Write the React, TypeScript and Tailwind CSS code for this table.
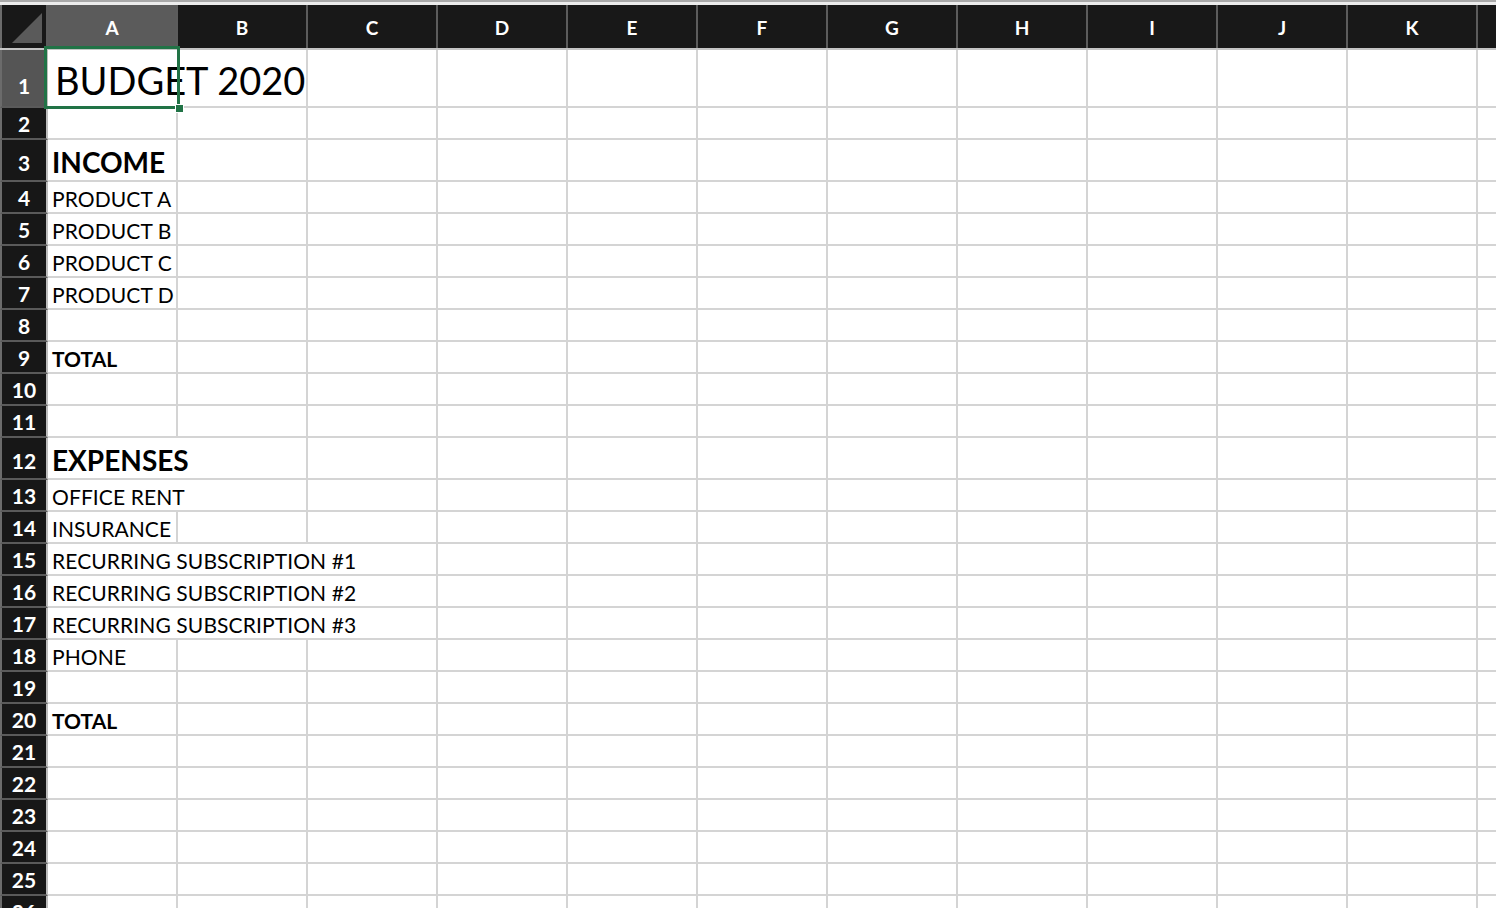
const COLUMNS = ["A", "B", "C", "D", "E", "F", "G", "H", "I", "J", "K", "L"];

type Kind = "title" | "section" | "bold" | "plain";

type SheetRow = {
  n: number;
  height: "h-[58px]" | "h-[32px]" | "h-[42px]";
  text?: string;
  kind?: Kind;
  span?: 1 | 2 | 3;
};

const ROWS: SheetRow[] = [
  { n: 1, height: "h-[58px]", text: "BUDGET 2020", kind: "title", span: 2 },
  { n: 2, height: "h-[32px]" },
  { n: 3, height: "h-[42px]", text: "INCOME", kind: "section" },
  { n: 4, height: "h-[32px]", text: "PRODUCT A", kind: "plain" },
  { n: 5, height: "h-[32px]", text: "PRODUCT B", kind: "plain" },
  { n: 6, height: "h-[32px]", text: "PRODUCT C", kind: "plain" },
  { n: 7, height: "h-[32px]", text: "PRODUCT D", kind: "plain" },
  { n: 8, height: "h-[32px]" },
  { n: 9, height: "h-[32px]", text: "TOTAL", kind: "bold" },
  { n: 10, height: "h-[32px]" },
  { n: 11, height: "h-[32px]" },
  { n: 12, height: "h-[42px]", text: "EXPENSES", kind: "section", span: 2 },
  { n: 13, height: "h-[32px]", text: "OFFICE RENT", kind: "plain", span: 2 },
  { n: 14, height: "h-[32px]", text: "INSURANCE", kind: "plain" },
  { n: 15, height: "h-[32px]", text: "RECURRING SUBSCRIPTION #1", kind: "plain", span: 3 },
  { n: 16, height: "h-[32px]", text: "RECURRING SUBSCRIPTION #2", kind: "plain", span: 3 },
  { n: 17, height: "h-[32px]", text: "RECURRING SUBSCRIPTION #3", kind: "plain", span: 3 },
  { n: 18, height: "h-[32px]", text: "PHONE", kind: "plain" },
  { n: 19, height: "h-[32px]" },
  { n: 20, height: "h-[32px]", text: "TOTAL", kind: "bold" },
  { n: 21, height: "h-[32px]" },
  { n: 22, height: "h-[32px]" },
  { n: 23, height: "h-[32px]" },
  { n: 24, height: "h-[32px]" },
  { n: 25, height: "h-[32px]" },
  { n: 26, height: "h-[32px]" },
];

const SPAN_WIDTH = {
  1: "w-[130px]",
  2: "w-[260px]",
  3: "w-[390px]",
};

const TEXT_STYLE: Record<Kind, string> = {
  title: "text-[38px] pl-[7px] pb-[7px]",
  section: "text-[28px] font-bold pl-1 pb-[4px]",
  bold: "text-[21px] font-bold pl-1 pb-[3px]",
  plain: "text-[21px] tracking-[0.1px] pl-1 pb-[3px]",
};

// row headers sit a bit higher in the taller rows
const NUMBER_PAD: Record<SheetRow["height"], string> = {
  "h-[58px]": "pb-[8px]",
  "h-[42px]": "pb-[5px]",
  "h-[32px]": "pb-[2px]",
};

function ColumnHeader({ letter }: { letter: string }) {
  const selected = letter === "A";
  return (
    <div
      className={`w-[130px] shrink-0 h-full flex items-center justify-center pt-1 border-r-2 border-[#5c5c5c] text-[19px] font-bold text-white ${
        selected ? "bg-[#5b5b5b]" : "bg-[#181818]"
      }`}
    >
      {letter}
    </div>
  );
}

function Row({ row }: { row: SheetRow }) {
  const span = row.span ?? 1;
  const rest = COLUMNS.length - span;
  const selected = row.n === 1;

  return (
    <div className={`flex shrink-0 ${row.height}`}>
      <div
        className={`w-[48px] shrink-0 h-full flex items-end justify-center border-l-2 border-l-[#6b6b6b] border-r-2 border-r-[#bdbdbd] border-b-2 border-b-[#5a5a5a] text-[21px] font-bold text-white leading-none ${
          NUMBER_PAD[row.height]
        } ${selected ? "bg-[#555555]" : "bg-[#171717]"}`}
      >
        <span className="pb-[2px]">{row.n}</span>
      </div>
      <div
        className={`${SPAN_WIDTH[span]} shrink-0 h-full flex items-end whitespace-nowrap border-r-2 border-b-2 border-[#d4d4d4] text-black leading-none ${
          row.kind ? TEXT_STYLE[row.kind] : ""
        }`}
      >
        {row.text}
      </div>
      {Array.from({ length: rest }).map((_, i) => (
        <div
          key={i}
          className="w-[130px] shrink-0 h-full border-r-2 border-b-2 border-[#d4d4d4]"
        />
      ))}
    </div>
  );
}

export default function App() {
  return (
    <div className="relative w-[1496px] h-[908px] overflow-hidden bg-white [font-family:Lato,sans-serif]">
      <div className="h-[5px] bg-[#ececec] border-t-[2px] border-[#a9a9a9]" />

      <div className="flex h-[45px] border-b-2 border-[#c4c4c4] bg-[#181818]">
        <div className="w-[48px] shrink-0 h-full border-l-2 border-l-[#6b6b6b] border-r-2 border-r-[#5c5c5c] bg-[#181818] flex items-end">
          <svg width="44" height="43" viewBox="0 0 44 43" className="block">
            <polygon points="10,38 40,38 40,8" fill="#5a5a5a" />
          </svg>
        </div>
        {COLUMNS.map((c) => (
          <ColumnHeader key={c} letter={c} />
        ))}
      </div>

      <div className="flex flex-col">
        {ROWS.map((row) => (
          <Row key={row.n} row={row} />
        ))}
      </div>

      {/* active cell A1 */}
      <div className="absolute left-[44px] top-[46px] w-[136px] h-[63px] border-[3px] border-[#217346]">
        <div className="absolute right-[-7px] bottom-[-7px] w-[9px] h-[9px] bg-[#217346] border border-white" />
      </div>
    </div>
  );
}
